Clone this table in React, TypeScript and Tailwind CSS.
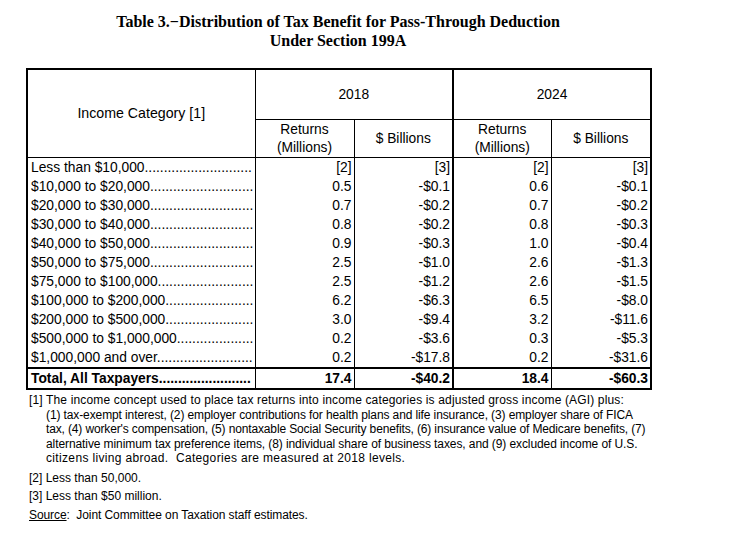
import React from "react";

const rows = [
  ["Less than $10,000", "[2]", "[3]", "[2]", "[3]"],
  ["$10,000 to $20,000", "0.5", "-$0.1", "0.6", "-$0.1"],
  ["$20,000 to $30,000", "0.7", "-$0.2", "0.7", "-$0.2"],
  ["$30,000 to $40,000", "0.8", "-$0.2", "0.8", "-$0.3"],
  ["$40,000 to $50,000", "0.9", "-$0.3", "1.0", "-$0.4"],
  ["$50,000 to $75,000", "2.5", "-$1.0", "2.6", "-$1.3"],
  ["$75,000 to $100,000", "2.5", "-$1.2", "2.6", "-$1.5"],
  ["$100,000 to $200,000", "6.2", "-$6.3", "6.5", "-$8.0"],
  ["$200,000 to $500,000", "3.0", "-$9.4", "3.2", "-$11.6"],
  ["$500,000 to $1,000,000", "0.2", "-$3.6", "0.3", "-$5.3"],
  ["$1,000,000 and over", "0.2", "-$17.8", "0.2", "-$31.6"],
];

// fill label with dot leaders up to the column edge
const withDots = (label: string, bold = false) => {
  const ctx = document.createElement("canvas").getContext("2d");
  if (!ctx) return label;
  ctx.font = `${bold ? "bold " : ""}13.8px "Liberation Sans"`;
  const room = 223 - ctx.measureText(label).width;
  const n = Math.max(0, Math.floor(room / ctx.measureText(".").width));
  return label + ".".repeat(n);
};

const App = () => {
  return (
    <div className="w-[742px] h-[534px] bg-white text-black font-['Liberation_Sans',Arial,sans-serif]">
      <div className="pl-[26px] pt-[12px]">
        <div className="w-[624px] text-center font-['Liberation_Serif','Times_New_Roman',serif] font-bold text-[16px] leading-[19px]">
          <p>Table 3.−Distribution of Tax Benefit for Pass-Through Deduction</p>
          <p>Under Section 199A</p>
        </div>

        <table className="mt-[18px] w-[624px] table-fixed border-collapse border-2 border-black text-[13.8px] leading-[19px]">
          <colgroup>
            <col className="w-[228px]" />
            <col className="w-[99px]" />
            <col className="w-[99px]" />
            <col className="w-[98px]" />
            <col className="w-[100px]" />
          </colgroup>
          <thead>
            <tr className="h-[50px]">
              <th rowSpan={2} className="border border-black font-normal text-[14.2px] text-center">
                Income Category [1]
              </th>
              <th colSpan={2} className="border border-black border-r-2 font-normal">
                2018
              </th>
              <th colSpan={2} className="border border-black font-normal">
                2024
              </th>
            </tr>
            <tr className="h-[36px] border-b border-black">
              <th className="border border-black font-normal leading-[18px] pt-[1px]">
                Returns
                <br />
                (Millions)
              </th>
              <th className="border border-black border-r-2 font-normal">$ Billions</th>
              <th className="border border-black font-normal leading-[18px] pt-[1px]">
                Returns
                <br />
                (Millions)
              </th>
              <th className="border border-black font-normal">$ Billions</th>
            </tr>
          </thead>
          <tbody>
            {rows.map((r, i) => (
              <tr key={i} className={i === 0 ? "h-[20px]" : "h-[19px]"}>
                <td className="border-x border-black pl-[3px] whitespace-nowrap overflow-hidden">
                  {withDots(r[0])}
                </td>
                <td className="border-x border-black text-right pr-[2px]">{r[1]}</td>
                <td className="border-l border-r-2 border-black text-right pr-[2px]">{r[2]}</td>
                <td className="border-x border-black text-right pr-[2px]">{r[3]}</td>
                <td className="border-x border-black text-right pr-[2px]">{r[4]}</td>
              </tr>
            ))}
            <tr className="h-[21px] border-t-2 border-black font-bold">
              <td className="border-x border-black pl-[3px] whitespace-nowrap overflow-hidden">
                {withDots("Total, All Taxpayers", true)}
              </td>
              <td className="border-x border-black text-right pr-[2px]">17.4</td>
              <td className="border-l border-r-2 border-black text-right pr-[2px]">-$40.2</td>
              <td className="border-x border-black text-right pr-[2px]">18.4</td>
              <td className="border-x border-black text-right pr-[2px]">-$60.3</td>
            </tr>
          </tbody>
        </table>

        <div className="mt-[3px] pl-[3px] text-[12px] leading-[14.5px] whitespace-nowrap">
          <p className="tracking-[0.15px]">
            [1] The income concept used to place tax returns into income categories is adjusted gross income (AGI) plus:
          </p>
          <div className="pl-[17px]">
            <p className="tracking-[-0.11px]">
              (1) tax-exempt interest, (2) employer contributions for health plans and life insurance, (3) employer share of FICA
            </p>
            <p className="tracking-[-0.14px]">
              tax, (4) worker's compensation, (5) nontaxable Social Security benefits, (6) insurance value of Medicare benefits, (7)
            </p>
            <p className="tracking-[-0.09px]">
              alternative minimum tax preference items, (8) individual share of business taxes, and (9) excluded income of U.S.
            </p>
            <p className="tracking-[0.34px]">citizens living abroad.&nbsp; Categories are measured at 2018 levels.</p>
          </div>
          <p className="mt-[5px]">[2] Less than 50,000.</p>
          <p className="mt-[4px]">[3] Less than $50 million.</p>
          <p className="mt-[4px] tracking-[-0.08px]">
            <span className="underline">Source</span>:&nbsp; Joint Committee on Taxation staff estimates.
          </p>
        </div>
      </div>
    </div>
  );
};

export default App;
